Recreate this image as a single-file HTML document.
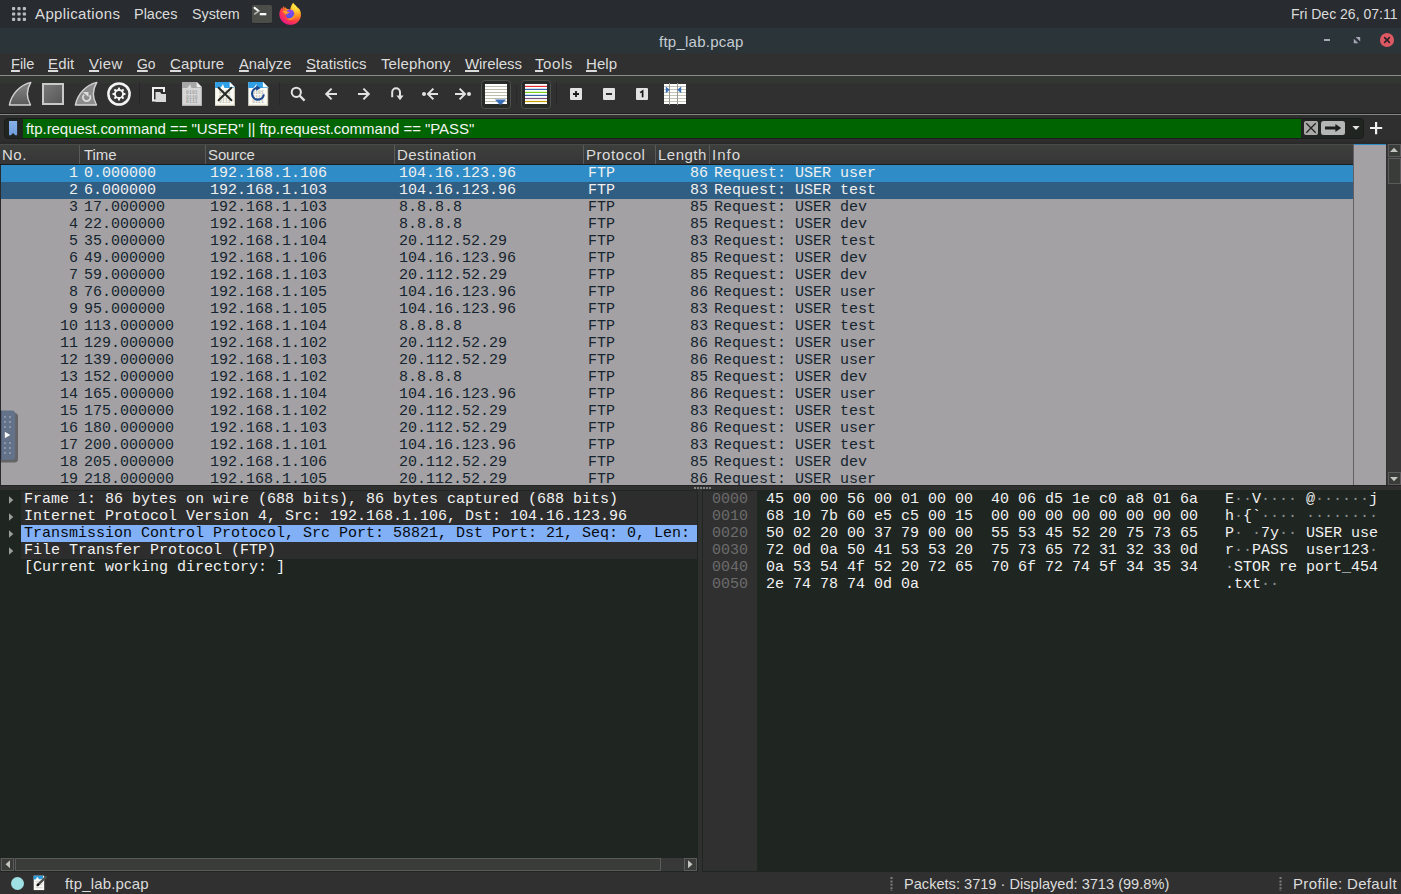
<!DOCTYPE html>
<html lang="en"><head><meta charset="utf-8"><title>ftp_lab.pcap</title>
<style>
*{box-sizing:border-box;margin:0;padding:0}
html,body{width:1401px;height:894px;overflow:hidden;background:#303030}
body{position:relative;font-family:"Liberation Sans",sans-serif;font-size:15px;color:#dcdcdc}
.abs{position:absolute}
.t{position:absolute;white-space:pre;line-height:1}
/* top panel */
#panel{left:0;top:0;width:1401px;height:28px;background:#282b2f}
#title{left:0;top:28px;width:1401px;height:25px;background:#2a3439}
#menubar{left:0;top:53px;width:1401px;height:23px;background:#303030}
#menusep{left:0;top:75px;width:1401px;height:1px;background:#8a8a86}
#toolbar{left:0;top:76px;width:1401px;height:38px;background:linear-gradient(#343634 0,#333533 7px,#303030 8px)}
#tbsep1{left:0;top:113px;width:1401px;height:1px;background:#1f1f1f}
#tbsep2{left:0;top:114px;width:1401px;height:1px;background:#858583}
#filterbar{left:0;top:115px;width:1401px;height:27px;background:#2f2f2f}
#fbdark{left:0;top:139px;width:1401px;height:5px;background:linear-gradient(#2f2f2f,#272927)}
#ffield{left:4px;top:118px;width:1360px;height:21px;background:#212522;border-radius:3.5px;border:1px solid #1a1d1b}
#fgreen{left:23px;top:119px;width:1278px;height:19px;background:#006400}
.m u{text-decoration:underline;text-underline-offset:0.6px;text-decoration-thickness:1.6px}
/* packet list */
#plist{left:0;top:144px;width:1354px;height:341px;background:#a3a1a4;overflow:hidden}
#phead{left:0;top:144px;width:1353px;height:21px;background:linear-gradient(#3d3f3d,#363636);border-top:1px solid #4a4a4a;border-bottom:1px solid #1c1c1c}
.hs{position:absolute;top:145px;width:1px;height:19px;background:#5a5a5a}
.r{position:absolute;left:1px;width:1353px;height:17px;font-family:"Liberation Mono",monospace;font-size:15px;color:#15242e;line-height:17px;white-space:pre}
.r span{position:absolute;top:0}
.r.s1{background:#308cc6;color:#f0f0f0}
.r.s2{background:#305d82;color:#f0f0f0}
.c0{right:1276px}.c1{left:83px}.c2{left:209px}.c3{left:398px}.c4{left:587px}.c5{right:646px}.c6{left:713px}
.mono{font-family:"Liberation Mono",monospace;font-size:15px;line-height:17px;white-space:pre;position:absolute}
.sb{background:#3a3c3a;border:1px solid #5c5a5c}
.asc i{font-style:normal;color:#8e918f}
#tApp{left:35px!important;right:auto!important;letter-spacing:0.371px}
#tPla{left:134px!important;right:auto!important;letter-spacing:0px;transform:scaleX(0.9629);transform-origin:0 0}
#tSys{left:192px!important;right:auto!important;letter-spacing:0px;transform:scaleX(0.9539);transform-origin:0 0}
#tClk{left:1291px!important;right:auto!important;letter-spacing:0px;transform:scaleX(0.9343);transform-origin:0 0}
#tTitle{left:659px!important;right:auto!important;letter-spacing:0.248px}
#m0{left:11px!important;right:auto!important;letter-spacing:0px;transform:scaleX(0.9688);transform-origin:0 0}
#m1{left:48px!important;right:auto!important;letter-spacing:0.141px}
#m2{left:89px!important;right:auto!important;letter-spacing:0.341px}
#m3{left:137px!important;right:auto!important;letter-spacing:0px;transform:scaleX(0.9254);transform-origin:0 0}
#m4{left:170px!important;right:auto!important;letter-spacing:0.139px}
#m5{left:239px!important;right:auto!important;letter-spacing:0px;transform:scaleX(0.9809);transform-origin:0 0}
#m6{left:306px!important;right:auto!important;letter-spacing:0.053px}
#m7{left:381px!important;right:auto!important;letter-spacing:0.113px}
#m8{left:465px!important;right:auto!important;letter-spacing:-0.089px}
#m9{left:535px!important;right:auto!important;letter-spacing:0.583px}
#m10{left:586px!important;right:auto!important;letter-spacing:0.05px}
#tFilter{left:26px!important;right:auto!important;letter-spacing:-0.053px}
#h0{left:2px!important;right:auto!important;letter-spacing:0.5px}
#h1{left:84px!important;right:auto!important;letter-spacing:-0.06px}
#h2{left:208px!important;right:auto!important;letter-spacing:-0.12px}
#h3{left:397px!important;right:auto!important;letter-spacing:0.412px}
#h4{left:586px!important;right:auto!important;letter-spacing:0.555px}
#h5{left:658px!important;right:auto!important;letter-spacing:0.473px}
#h6{left:712px!important;right:auto!important;letter-spacing:0.986px}
#tSt1{left:65px!important;right:auto!important;letter-spacing:0.173px}
#tSt2{left:904px!important;right:auto!important;letter-spacing:0px;transform:scaleX(0.9728);transform-origin:0 0}
#tSt3{left:1293px!important;right:auto!important;letter-spacing:0.345px}
</style></head><body>
<!-- desktop panel -->
<div id="panel" class="abs"></div>
<svg class="abs" style="left:12px;top:7px" width="15" height="15" viewBox="0 0 15 15"><g fill="#b9bdc2"><rect x="0" y="0" width="3.2" height="3.2" rx=".9"/><rect x="5.4" y="0" width="3.2" height="3.2" rx=".9"/><rect x="10.8" y="0" width="3.2" height="3.2" rx=".9"/><rect x="0" y="5.4" width="3.2" height="3.2" rx=".9"/><rect x="5.4" y="5.4" width="3.2" height="3.2" rx=".9"/><rect x="10.8" y="5.4" width="3.2" height="3.2" rx=".9"/><rect x="0" y="10.8" width="3.2" height="3.2" rx=".9"/><rect x="5.4" y="10.8" width="3.2" height="3.2" rx=".9"/><rect x="10.8" y="10.8" width="3.2" height="3.2" rx=".9"/></g></svg>
<div class="t p" id="tApp" style="left:35px;top:6px">Applications</div>
<div class="t p" id="tPla" style="left:135px;top:6px">Places</div>
<div class="t p" id="tSys" style="left:193px;top:6px">System</div>
<div class="t p" id="tClk" style="right:4px;top:6px">Fri Dec 26, 07:11</div>
<!-- terminal icon -->
<svg class="abs" style="left:252px;top:4px" width="20" height="20" viewBox="252 4 20 20"><rect x="252" y="5.4" width="20" height="18" rx="1.6" fill="#1c1e22"/><rect x="252" y="5" width="20" height="18" rx="1.6" fill="#4b4d49"/><path d="M254.6 7.9 L258.6 11" fill="none" stroke="#fbfbfb" stroke-width="2" stroke-linecap="round"/><path d="M258.4 11.4 L254.8 13.9" fill="none" stroke="#b4b4b2" stroke-width="1.7" stroke-linecap="round"/><rect x="259.8" y="13" width="6.5" height="2.3" fill="#fbfbfb"/></svg>
<!-- firefox icon -->
<svg class="abs" style="left:278px;top:2px" width="24" height="24" viewBox="278 2 24 24"><defs><radialGradient id="ffg" gradientUnits="userSpaceOnUse" cx="296.5" cy="5.5" r="22"><stop offset="0" stop-color="#fff44f"/><stop offset="0.28" stop-color="#ffc52e"/><stop offset="0.5" stop-color="#ff8a1f"/><stop offset="0.72" stop-color="#ff3b47"/><stop offset="1" stop-color="#e01490"/></radialGradient><linearGradient id="ffp" x1="0" y1="0" x2="0" y2="1"><stop offset="0" stop-color="#9b42ea"/><stop offset="1" stop-color="#4757e8"/></linearGradient><linearGradient id="ffy" x1="0" y1="0" x2="1" y2="1"><stop offset="0" stop-color="#ffbd2a"/><stop offset="1" stop-color="#ff7d1a"/></linearGradient></defs>
<path d="M293.2 2.8 C294.4 4.6 295.8 5.6 297.2 7.2 C298.2 8.2 298.6 7.6 299.2 9.2 C299.8 9.2 300 9.6 300.1 10.4 C301.8 14.4 300.9 19.2 297.6 22.2 C294 25.4 288.2 25.7 284.1 22.9 C279.9 20.1 278.5 15.2 279.8 11.3 C280.3 9.7 281.2 8.3 282.3 7.3 C282.4 8 282.5 8.8 282.9 9.2 C283 7.8 283.2 6.8 283.6 6 C284.2 6.8 284.6 7.6 284.8 8.4 C285.1 8 285.4 7.6 285.8 7.3 C286 8 286.4 8.6 287 9 C288.2 8.9 289.4 9.3 290.2 10 C290.4 7.4 291.4 4.8 293.2 2.8 Z" fill="url(#ffg)"/>
<circle cx="289.9" cy="14" r="4.5" fill="url(#ffp)"/>
<path d="M282.3 11.7 C284.4 11 287.6 11.2 289.8 12.7 C288 12.9 286.8 13.7 286.3 14.9 C285.5 13.4 283.8 12.4 282.3 11.7 Z" fill="url(#ffy)"/>
<path d="M294.3 13 C295.6 15.4 294.8 18.2 292.4 19.4 C290.4 20.4 288 20 286.6 18.4 C288.8 19 291.4 18.4 292.8 16.6 C293.6 15.6 294.1 14.3 294.3 13 Z" fill="#ff9a26" opacity=".85"/>
</svg>
<!-- title bar -->
<div id="title" class="abs"></div>
<div class="t" id="tTitle" style="left:659px;top:34px;color:#c6ccd3">ftp_lab.pcap</div>
<div class="abs" style="left:1324px;top:39px;width:6px;height:2px;background:#a6a8b6"></div>
<svg class="abs" style="left:1352px;top:35px" width="10" height="10" viewBox="1352 35 10 10"><path d="M1355.6 37 H1360.2 V41.6 Z M1353.8 38.7 V43.2 H1358.3 Z" fill="#a6a8b6"/></svg>
<svg class="abs" style="left:1379px;top:32px" width="16" height="16" viewBox="1379 32 16 16"><circle cx="1387" cy="40" r="7.05" fill="#dc5862"/><path d="M1384.6 37.6 L1389.4 42.4 M1389.4 37.6 L1384.6 42.4" stroke="#2a2126" stroke-width="1.5" stroke-linecap="round"/></svg>
<!-- menubar -->
<div id="menubar" class="abs"></div>
<div id="menusep" class="abs"></div>
<div class="t m" id="m0" style="left:10px;top:56px"><u>F</u>ile</div>
<div class="t m" id="m1" style="left:48px;top:56px"><u>E</u>dit</div>
<div class="t m" id="m2" style="left:89px;top:56px"><u>V</u>iew</div>
<div class="t m" id="m3" style="left:137px;top:56px"><u>G</u>o</div>
<div class="t m" id="m4" style="left:171px;top:56px"><u>C</u>apture</div>
<div class="t m" id="m5" style="left:239px;top:56px"><u>A</u>nalyze</div>
<div class="t m" id="m6" style="left:306px;top:56px"><u>S</u>tatistics</div>
<div class="t m" id="m7" style="left:381px;top:56px">Telephon<u>y</u></div>
<div class="t m" id="m8" style="left:465px;top:56px"><u>W</u>ireless</div>
<div class="t m" id="m9" style="left:536px;top:56px"><u>T</u>ools</div>
<div class="t m" id="m10" style="left:586px;top:56px"><u>H</u>elp</div>
<!-- toolbar -->
<div id="toolbar" class="abs"></div>
<div id="tbsep1" class="abs"></div><div id="tbsep2" class="abs"></div>
<!--ICONS--><svg class="abs" style="left:0;top:76px" width="700" height="38" viewBox="0 76 700 38">
<defs>
<linearGradient id="gfin" x1="0" y1="0" x2="0" y2="1"><stop offset="0" stop-color="#868686"/><stop offset="1" stop-color="#5a5a5a"/></linearGradient>
<linearGradient id="gsq" x1="0" y1="0" x2="1" y2="1"><stop offset="0" stop-color="#7a7a7a"/><stop offset="1" stop-color="#565656"/></linearGradient>
</defs>
<!-- shark fin (start capture) -->
<path d="M9.4 105 C11.5 94 19.5 85.3 30.8 82.4 C26.6 89.5 26.6 98 30.5 105 Z" fill="url(#gfin)" stroke="#d2d2d2" stroke-width="1.4" stroke-linejoin="round"/>
<!-- stop square -->
<rect x="43" y="84" width="20" height="20" fill="url(#gsq)" stroke="#c9c9c9" stroke-width="2"/>
<!-- restart fin -->
<path d="M75.4 105 C77.5 94 85.5 85.3 96.8 82.4 C92.6 89.5 92.6 98 96.5 105 Z" fill="#8c8c8c" stroke="#d2d2d2" stroke-width="1.4" stroke-linejoin="round"/>
<path d="M84.2 94.6 A3.7 3.7 0 1 0 89.6 95.2" fill="none" stroke="#dcdcdc" stroke-width="1.9"/>
<path d="M82.7 92 H88.5 V96.9 Z" fill="#dcdcdc"/>
<!-- options gear -->
<circle cx="119" cy="94" r="10.6" fill="#3a3a3a" stroke="#f4f4f4" stroke-width="2.5"/>
<g fill="#f4f4f4"><circle cx="119" cy="94" r="5"/>
<g id="teeth"><rect x="118" y="87.5" width="2" height="3" rx=".6"/><rect x="118" y="97.5" width="2" height="3" rx=".6"/></g>
<use href="#teeth" transform="rotate(45 119 94)"/><use href="#teeth" transform="rotate(90 119 94)"/><use href="#teeth" transform="rotate(135 119 94)"/></g>
<circle cx="119" cy="94" r="3.1" fill="#343434"/>
<!-- separator -->
<rect x="139" y="82" width="1" height="23" fill="#272727"/>
<!-- open files -->
<path d="M156 100.5 H153 V88 H164 V92" fill="none" stroke="#efefef" stroke-width="2"/>
<path d="M155.5 92 H160 L161.5 94 H166 V102 H155.5 Z" fill="#d9d9d9"/>
<!-- save (grey doc) -->
<g><path d="M182.1 82.1 H196.7 L201.9 87.3 V105.8 H182.1 Z" fill="#d6d6d6"/>
<path d="M182.1 82.1 H196.7 L201.9 87.3 V88 H182.1 Z" fill="#a7a7a7"/>
<path d="M186.29999999999998 88.4 Q188.5 87.6 190.0 84 Q190.7 86.6 191.7 88.4 Z" fill="#dadada"/>
<path d="M196.7 82.1 L201.9 87.3 H196.7 Z" fill="#ececec"/>
<path d="M201.4 87.3 V105.3 H182.1" fill="none" stroke="#b2b2b2" stroke-width="1"/>
<g fill="#a4a4a4" font-family="Liberation Mono,monospace" font-size="4.6" font-weight="bold" letter-spacing=".15"><text x="186.1" y="94.2">0101</text><text x="186.1" y="98.8">0110</text><text x="186.1" y="103.4">0111</text></g></g>
<!-- close (doc with X) -->
<g><path d="M215.1 82.1 H229.7 L234.9 87.3 V105.8 H215.1 Z" fill="#fbfbf3"/>
<path d="M215.1 82.1 H229.7 L234.9 87.3 V88 H215.1 Z" fill="#309fe6"/>
<path d="M219.29999999999998 88.4 Q221.5 87.6 223.0 84 Q223.7 86.6 224.7 88.4 Z" fill="#fdfdf8"/>
<path d="M229.7 82.1 L234.9 87.3 H229.7 Z" fill="#ffffff"/>
<path d="M234.4 87.3 V105.3 H215.1" fill="none" stroke="#c9c7b2" stroke-width="1"/>
<g fill="#bdbbb0" font-family="Liberation Mono,monospace" font-size="4.6" font-weight="bold" letter-spacing=".15"><text x="219.1" y="94.2">0101</text><text x="219.1" y="98.8">0110</text><text x="219.1" y="103.4">0111</text></g>
<path d="M218.6 87.7 L231.4 100.2 M231.4 87.7 L218.6 100.2" stroke="#272b27" stroke-width="2" stroke-linecap="round"/></g>
<!-- reload doc -->
<g><path d="M248.3 82.1 H262.90000000000003 L268.1 87.3 V105.8 H248.3 Z" fill="#fbfbf3"/>
<path d="M248.3 82.1 H262.90000000000003 L268.1 87.3 V88 H248.3 Z" fill="#309fe6"/>
<path d="M252.5 88.4 Q254.70000000000002 87.6 256.2 84 Q256.90000000000003 86.6 257.90000000000003 88.4 Z" fill="#fdfdf8"/>
<path d="M262.90000000000003 82.1 L268.1 87.3 H262.90000000000003 Z" fill="#ffffff"/>
<path d="M267.6 87.3 V105.3 H248.3" fill="none" stroke="#c9c7b2" stroke-width="1"/>
<g fill="#bdbbb0" font-family="Liberation Mono,monospace" font-size="4.6" font-weight="bold" letter-spacing=".15"><text x="252.3" y="94.2">0101</text><text x="252.3" y="98.8">0110</text><text x="252.3" y="103.4">0111</text></g>
<path d="M263.8 94.3 A5.9 5.9 0 1 1 256.9 87.9" fill="none" stroke="#1b4690" stroke-width="2.1"/><path d="M256.2 85.4 L260.7 88 L256.2 90.8 Z" fill="#1b4690"/></g>
<!-- separator -->
<rect x="279" y="82" width="1" height="23" fill="#272727"/>
<!-- find -->
<g stroke="#e2e2e2" fill="none" stroke-width="2"><circle cx="296.3" cy="92.3" r="4.6"/><path d="M299.6 95.6 L304.6 100.6" stroke-width="2.2"/></g>
<!-- back / forward -->
<g stroke="#e2e2e2" fill="none" stroke-width="2"><path d="M337 94 H326.5 M331.6 88.6 L326.2 94 L331.6 99.4"/><path d="M358 94 H368.5 M363.4 88.6 L368.8 94 L363.4 99.4"/></g>
<!-- go to packet -->
<g stroke="#e2e2e2" fill="none" stroke-width="2"><path d="M392.2 97.2 V92.2 A3.9 3.9 0 0 1 400 92.2 V97"/></g><path d="M396.4 95.6 H403.6 L400 100.2 Z" fill="#e2e2e2"/>
<!-- first / last -->
<circle cx="424" cy="94" r="2" fill="#e2e2e2"/><g stroke="#e2e2e2" fill="none" stroke-width="2"><path d="M438 94 H428.5 M433.4 88.6 L428 94 L433.4 99.4"/><path d="M455 94 H464.5 M459.6 88.6 L465 94 L459.6 99.4"/></g><circle cx="469" cy="94" r="2" fill="#e2e2e2"/>
<!-- autoscroll toggle -->
<rect x="481.5" y="80.5" width="29" height="28" rx="3" fill="#292b29" stroke="#4e504e"/>
<rect x="485" y="84" width="22" height="20" fill="#fff"/>
<g stroke="#bdbdae" stroke-width="1"><path d="M485 86.5 H507 M485 89.5 H507 M485 92.5 H507 M485 95.5 H507 M485 98.5 H507 M485 101.5 H507"/></g>
<path d="M495 99.4 H506 L502 104 Q500.5 105.4 499 104 Z" fill="#3a70b8"/>
<rect x="516" y="85" width="1" height="19" fill="#292929"/>
<!-- colorize toggle -->
<rect x="521.5" y="80.5" width="29" height="28" rx="3" fill="#292b29" stroke="#4e504e"/>
<rect x="525" y="84" width="22" height="20" fill="#fff"/>
<g stroke-width="1.2"><path d="M525 86.4 H547" stroke="#ea2f2f"/><path d="M525 89.4 H547" stroke="#3465a4"/><path d="M525 92.4 H547" stroke="#73d216"/><path d="M525 95.4 H547" stroke="#3465a4"/><path d="M525 98.5 H547" stroke="#75507b"/><path d="M525 101.5 H547" stroke="#c4a000"/></g>
<!-- separator -->
<rect x="556" y="82" width="1" height="23" fill="#272727"/>
<!-- zoom in/out/1 -->
<rect x="570" y="88" width="12" height="12" rx="1" fill="#e2e2e2"/><path d="M573 94 H579 M576 91 V97" stroke="#1a1a1a" stroke-width="1.8"/>
<rect x="603" y="88" width="12" height="12" rx="1" fill="#e2e2e2"/><path d="M606 94 H612" stroke="#1a1a1a" stroke-width="1.8"/>
<rect x="636" y="88" width="12" height="12" rx="1" fill="#e2e2e2"/><path d="M640.2 92.6 L642.6 91 V97.2" stroke="#1a1a1a" stroke-width="1.7" fill="none"/>
<!-- resize columns -->
<rect x="664" y="84" width="22" height="20" fill="#fff"/>
<g stroke="#c4c4b6" stroke-width="1"><path d="M664 86.5 H686 M664 89.5 H686 M664 92.5 H686 M664 95.5 H686 M664 98.5 H686 M664 101.5 H686"/></g>
<path d="M669.5 83 V105 M677.5 83 V105" stroke="#9a9a90" stroke-width="1"/>
<path d="M665.8 86.4 L669.7 89.8 L665.8 93.2 Z M681.2 86.4 L677.3 89.8 L681.2 93.2 Z" fill="#3a70b8"/>
</svg>
<!--/ICONS-->
<!-- filter bar -->
<div id="filterbar" class="abs"></div><div id="fbdark" class="abs"></div>
<div id="ffield" class="abs"></div>
<div id="fgreen" class="abs"></div>
<div class="t" id="tFilter" style="left:26px;top:121px;color:#f4f4f4">ftp.request.command == "USER" || ftp.request.command == "PASS"</div>
<!--FILT--><svg class="abs" style="left:0;top:116px" width="1401" height="26" viewBox="0 116 1401 26">
<defs><linearGradient id="gbk" x1="0" y1="0" x2="0" y2="1"><stop offset="0" stop-color="#8ab2ea"/><stop offset="1" stop-color="#6d9cda"/></linearGradient></defs><path d="M9 121 H17.1 V135.2 H15.2 L13.05 132.9 L10.9 135.2 H9 Z" fill="url(#gbk)"/>
<rect x="1304" y="121" width="14" height="14" rx="2" fill="#a9a9a6"/>
<path d="M1306.3 123.3 L1315.7 132.7 M1315.7 123.3 L1306.3 132.7" stroke="#222422" stroke-width="1.3"/>
<rect x="1321" y="121" width="24" height="14" rx="2.5" fill="#b6b6b6"/>
<path d="M1325 126.4 H1335.4 V124 L1341.2 128 L1335.4 132 V129.6 H1325 Z" fill="#1c1f1d"/>
<path d="M1352.4 126 H1359.6 L1356 130 Z" fill="#e4e4e4"/>
<path d="M1370 128 H1382.2 M1376.1 122 V134.2" stroke="#f2f2f2" stroke-width="2.2"/>
</svg>
<!--/FILT-->
<!-- packet list -->
<div id="plist" class="abs"></div>
<div id="phead" class="abs"></div>
<div class="hs" style="left:79px"></div><div class="hs" style="left:205px"></div><div class="hs" style="left:394px"></div><div class="hs" style="left:583px"></div><div class="hs" style="left:655px"></div><div class="hs" style="left:709px"></div>
<div class="t h" id="h0" style="left:3px;top:147px">No.</div>
<div class="t h" id="h1" style="left:83px;top:147px">Time</div>
<div class="t h" id="h2" style="left:209px;top:147px">Source</div>
<div class="t h" id="h3" style="left:398px;top:147px">Destination</div>
<div class="t h" id="h4" style="left:587px;top:147px">Protocol</div>
<div class="t h" id="h5" style="left:659px;top:147px">Length</div>
<div class="t h" id="h6" style="left:713px;top:147px">Info</div>
<div class="abs" style="left:0;top:165px;width:1px;height:320px;background:#2a2a2a;z-index:3"></div>
<div id="rows" class="abs" style="left:0;top:165px;width:1354px;height:320px;overflow:hidden">
<div style="top:0px" class="r s1"><span class="c0">1</span><span class="c1">0.000000</span><span class="c2">192.168.1.106</span><span class="c3">104.16.123.96</span><span class="c4">FTP</span><span class="c5">86</span><span class="c6">Request: USER user</span></div>
<div style="top:17px" class="r s2"><span class="c0">2</span><span class="c1">6.000000</span><span class="c2">192.168.1.103</span><span class="c3">104.16.123.96</span><span class="c4">FTP</span><span class="c5">83</span><span class="c6">Request: USER test</span></div>
<div style="top:34px" class="r"><span class="c0">3</span><span class="c1">17.000000</span><span class="c2">192.168.1.103</span><span class="c3">8.8.8.8</span><span class="c4">FTP</span><span class="c5">85</span><span class="c6">Request: USER dev</span></div>
<div style="top:51px" class="r"><span class="c0">4</span><span class="c1">22.000000</span><span class="c2">192.168.1.106</span><span class="c3">8.8.8.8</span><span class="c4">FTP</span><span class="c5">85</span><span class="c6">Request: USER dev</span></div>
<div style="top:68px" class="r"><span class="c0">5</span><span class="c1">35.000000</span><span class="c2">192.168.1.104</span><span class="c3">20.112.52.29</span><span class="c4">FTP</span><span class="c5">83</span><span class="c6">Request: USER test</span></div>
<div style="top:85px" class="r"><span class="c0">6</span><span class="c1">49.000000</span><span class="c2">192.168.1.106</span><span class="c3">104.16.123.96</span><span class="c4">FTP</span><span class="c5">85</span><span class="c6">Request: USER dev</span></div>
<div style="top:102px" class="r"><span class="c0">7</span><span class="c1">59.000000</span><span class="c2">192.168.1.103</span><span class="c3">20.112.52.29</span><span class="c4">FTP</span><span class="c5">85</span><span class="c6">Request: USER dev</span></div>
<div style="top:119px" class="r"><span class="c0">8</span><span class="c1">76.000000</span><span class="c2">192.168.1.105</span><span class="c3">104.16.123.96</span><span class="c4">FTP</span><span class="c5">86</span><span class="c6">Request: USER user</span></div>
<div style="top:136px" class="r"><span class="c0">9</span><span class="c1">95.000000</span><span class="c2">192.168.1.105</span><span class="c3">104.16.123.96</span><span class="c4">FTP</span><span class="c5">83</span><span class="c6">Request: USER test</span></div>
<div style="top:153px" class="r"><span class="c0">10</span><span class="c1">113.000000</span><span class="c2">192.168.1.104</span><span class="c3">8.8.8.8</span><span class="c4">FTP</span><span class="c5">83</span><span class="c6">Request: USER test</span></div>
<div style="top:170px" class="r"><span class="c0">11</span><span class="c1">129.000000</span><span class="c2">192.168.1.102</span><span class="c3">20.112.52.29</span><span class="c4">FTP</span><span class="c5">86</span><span class="c6">Request: USER user</span></div>
<div style="top:187px" class="r"><span class="c0">12</span><span class="c1">139.000000</span><span class="c2">192.168.1.103</span><span class="c3">20.112.52.29</span><span class="c4">FTP</span><span class="c5">86</span><span class="c6">Request: USER user</span></div>
<div style="top:204px" class="r"><span class="c0">13</span><span class="c1">152.000000</span><span class="c2">192.168.1.102</span><span class="c3">8.8.8.8</span><span class="c4">FTP</span><span class="c5">85</span><span class="c6">Request: USER dev</span></div>
<div style="top:221px" class="r"><span class="c0">14</span><span class="c1">165.000000</span><span class="c2">192.168.1.104</span><span class="c3">104.16.123.96</span><span class="c4">FTP</span><span class="c5">86</span><span class="c6">Request: USER user</span></div>
<div style="top:238px" class="r"><span class="c0">15</span><span class="c1">175.000000</span><span class="c2">192.168.1.102</span><span class="c3">20.112.52.29</span><span class="c4">FTP</span><span class="c5">83</span><span class="c6">Request: USER test</span></div>
<div style="top:255px" class="r"><span class="c0">16</span><span class="c1">180.000000</span><span class="c2">192.168.1.103</span><span class="c3">20.112.52.29</span><span class="c4">FTP</span><span class="c5">86</span><span class="c6">Request: USER user</span></div>
<div style="top:272px" class="r"><span class="c0">17</span><span class="c1">200.000000</span><span class="c2">192.168.1.101</span><span class="c3">104.16.123.96</span><span class="c4">FTP</span><span class="c5">83</span><span class="c6">Request: USER test</span></div>
<div style="top:289px" class="r"><span class="c0">18</span><span class="c1">205.000000</span><span class="c2">192.168.1.106</span><span class="c3">20.112.52.29</span><span class="c4">FTP</span><span class="c5">85</span><span class="c6">Request: USER dev</span></div>
<div style="top:306px" class="r"><span class="c0">19</span><span class="c1">218.000000</span><span class="c2">192.168.1.105</span><span class="c3">20.112.52.29</span><span class="c4">FTP</span><span class="c5">86</span><span class="c6">Request: USER user</span></div>

</div>
<!-- minimap + vscroll -->
<div class="abs" style="left:1353px;top:144px;width:1px;height:341px;background:#626062"></div>
<div class="abs" style="left:1354px;top:144px;width:32px;height:341px;background:#a3a1a4"></div>
<div class="abs" style="left:1354px;top:144px;width:32px;height:1px;background:#308cc6"></div>
<div class="abs" style="left:1387px;top:144px;width:14px;height:342px;background:#373737"></div>
<div class="abs sb" style="left:1388px;top:144px;width:13px;height:13px"></div>
<svg class="abs" style="left:1390px;top:147px" width="8" height="6" viewBox="0 0 8 6"><path d="M0 5 L4 0.8 L8 5Z" fill="#c4c4c0"/></svg>
<div class="abs sb" style="left:1388px;top:158px;width:13px;height:26px"></div>
<div class="abs sb" style="left:1388px;top:472px;width:13px;height:13px"></div>
<svg class="abs" style="left:1390px;top:476px" width="8" height="6" viewBox="0 0 8 6"><path d="M0 1 L4 5.2 L8 1Z" fill="#c4c4c0"/></svg>
<!-- left tab handle -->
<svg class="abs" style="left:0;top:408px;z-index:5" width="20" height="58" viewBox="0 408 20 58">
<path d="M1 413 H14.5 Q18 413 18 416.5 V459 Q18 462.6 14.5 462.6 H1 Z" fill="#656567"/>
<path d="M0 410.4 H12 Q15.2 410.4 15.2 413.6 V456.5 Q15.2 459.8 12 459.8 H0 Z" fill="#637189"/>
<rect x="0" y="410.4" width="1" height="49.4" fill="#1e2228"/><rect x="1" y="410.4" width="1" height="49.4" fill="#566379"/>
<rect x="4" y="416" width="2" height="2" fill="#8a96ab"/><rect x="9" y="416" width="2" height="2" fill="#8a96ab"/><rect x="4" y="421" width="2" height="2" fill="#8a96ab"/><rect x="9" y="421" width="2" height="2" fill="#8a96ab"/><rect x="4" y="426" width="2" height="2" fill="#8a96ab"/><rect x="9" y="426" width="2" height="2" fill="#8a96ab"/><rect x="4" y="442" width="2" height="2" fill="#8a96ab"/><rect x="9" y="442" width="2" height="2" fill="#8a96ab"/><rect x="4" y="447" width="2" height="2" fill="#8a96ab"/><rect x="9" y="447" width="2" height="2" fill="#8a96ab"/><rect x="4" y="452" width="2" height="2" fill="#8a96ab"/><rect x="9" y="452" width="2" height="2" fill="#8a96ab"/>
<path d="M4.8 431.8 L10.3 435 L4.8 438.2 Z" fill="#fafafa"/>
</svg>
<!-- splitter -->
<div class="abs" style="left:0;top:485px;width:1401px;height:6px;background:#303030"></div>
<div class="abs" style="left:0;top:485px;width:1401px;height:1px;background:#242424"></div>
<div class="abs" style="left:694px;top:487px;width:2px;height:2px;background:#848484"></div><div class="abs" style="left:697px;top:487px;width:2px;height:2px;background:#848484"></div><div class="abs" style="left:700px;top:487px;width:2px;height:2px;background:#848484"></div><div class="abs" style="left:703px;top:487px;width:2px;height:2px;background:#848484"></div><div class="abs" style="left:706px;top:487px;width:2px;height:2px;background:#848484"></div><div class="abs" style="left:709px;top:487px;width:2px;height:2px;background:#848484"></div>
<!-- detail pane -->
<div id="detail" class="abs" style="left:0;top:490px;width:698px;height:382px;background:#1f2521"></div>
<div class="abs" style="left:21px;top:491px;width:676px;height:68px;background:#2d2d2d"></div>
<div class="abs" style="left:21px;top:525px;width:676px;height:17px;background:#82b0f6"></div>
<div class="mono d" style="left:24px;top:491px;color:#f2f2f2">Frame 1: 86 bytes on wire (688 bits), 86 bytes captured (688 bits)</div>
<div class="mono d" style="left:24px;top:508px;color:#f2f2f2">Internet Protocol Version 4, Src: 192.168.1.106, Dst: 104.16.123.96</div>
<div class="mono d" style="left:24px;top:525px;color:#05080c;width:672px;overflow:hidden">Transmission Control Protocol, Src Port: 58821, Dst Port: 21, Seq: 0, Len: 32</div>
<div class="mono d" style="left:24px;top:542px;color:#f2f2f2">File Transfer Protocol (FTP)</div>
<div class="mono d" style="left:24px;top:559px;color:#f2f2f2">[Current working directory: ]</div>
<svg class="abs" style="left:9px;top:495.5px" width="5" height="8" viewBox="0 0 5 8"><path d="M0 0.2 L4.3 4 L0 7.8Z" fill="#9b9e99"/></svg>
<svg class="abs" style="left:9px;top:512.5px" width="5" height="8" viewBox="0 0 5 8"><path d="M0 0.2 L4.3 4 L0 7.8Z" fill="#9b9e99"/></svg>
<svg class="abs" style="left:9px;top:529.5px" width="5" height="8" viewBox="0 0 5 8"><path d="M0 0.2 L4.3 4 L0 7.8Z" fill="#9b9e99"/></svg>
<svg class="abs" style="left:9px;top:546.5px" width="5" height="8" viewBox="0 0 5 8"><path d="M0 0.2 L4.3 4 L0 7.8Z" fill="#9b9e99"/></svg>
<!-- hscroll -->
<div class="abs" style="left:0;top:858px;width:697px;height:13px;background:#383838"></div>
<div class="abs sb" style="left:1px;top:858px;width:13px;height:13px"></div>
<svg class="abs" style="left:4.5px;top:860px" width="5" height="9" viewBox="0 0 5 9"><path d="M5 0.3 L0.5 4.3 L5 8.3Z" fill="#c4c4c0"/></svg>
<div class="abs sb" style="left:15px;top:858px;width:646px;height:13px"></div>
<div class="abs sb" style="left:684px;top:858px;width:13px;height:13px"></div>
<svg class="abs" style="left:688px;top:860px" width="5" height="9" viewBox="0 0 5 9"><path d="M0 0.3 L4.5 4.3 L0 8.3Z" fill="#c4c4c0"/></svg>
<!-- vertical splitter -->
<div class="abs" style="left:698px;top:490px;width:4px;height:382px;background:#303030"></div>
<!-- bytes pane -->
<div id="bytes" class="abs" style="left:702px;top:490px;width:699px;height:382px;background:#1f2521"></div>
<div class="abs" style="left:703px;top:491px;width:54px;height:380px;background:#303030"></div>
<div class="mono" style="left:712px;top:491px;color:#6c6c6c">0000
0010
0020
0030
0040
0050</div>
<div class="mono" style="left:766px;top:491px;color:#f2f2f2">45 00 00 56 00 01 00 00  40 06 d5 1e c0 a8 01 6a
68 10 7b 60 e5 c5 00 15  00 00 00 00 00 00 00 00
50 02 20 00 37 79 00 00  55 53 45 52 20 75 73 65
72 0d 0a 50 41 53 53 20  75 73 65 72 31 32 33 0d
0a 53 54 4f 52 20 72 65  70 6f 72 74 5f 34 35 34
2e 74 78 74 0d 0a</div>
<div class="mono asc" style="left:1225px;top:491px;color:#f2f2f2">E<i>··</i>V<i>····</i> @<i>······</i>j
h<i>·</i>{`<i>····</i> <i>········</i>
P<i>·</i> <i>·</i>7y<i>··</i> USER use
r<i>··</i>PASS  user123<i>·</i>
<i>·</i>STOR re port_454
.txt<i>··</i></div>
<!-- status bar -->
<div class="abs" style="left:0;top:872px;width:1401px;height:22px;background:#303030"></div>
<div class="abs" style="left:10.5px;top:876.5px;width:13px;height:13px;border-radius:50%;background:#9fe0e4"></div>
<svg class="abs" style="left:30px;top:872px" width="20" height="22" viewBox="30 872 20 22">
<rect x="33.7" y="875.7" width="10.5" height="14.4" fill="#f7f7f3"/>
<path d="M33.7 875.7 H43 V878.6 Q40.5 879.6 39 879 L37.2 876.8 L35.8 879.3 Q34.6 879.6 33.7 879.2 Z" fill="#2b9bde"/>
<path d="M35.5 881.6 H42.5 M35.5 884.6 H42.5 M35.5 887.6 H42.5" stroke="#d4d4d0" stroke-width="1"/>
<path d="M37.6 885.2 L45.8 877.2" stroke="#4c504c" stroke-width="2.4" stroke-linecap="round"/>
<path d="M37.2 885.6 L39.2 884.9 L38 883.6 Z" fill="#050505" stroke="#050505" stroke-width=".8"/>
</svg>
<svg class="abs" style="left:890px;top:876px" width="3" height="16" viewBox="0 0 3 16"><path d="M1.5 1 V15" stroke="#7e7e7e" stroke-width="2" stroke-dasharray="2 1.4"/></svg>
<svg class="abs" style="left:1278.5px;top:876px" width="3" height="16" viewBox="0 0 3 16"><path d="M1.5 1 V15" stroke="#7e7e7e" stroke-width="2" stroke-dasharray="2 1.4"/></svg>
<div class="t" id="tSt1" style="left:64px;top:876px">ftp_lab.pcap</div>
<div class="t" id="tSt2" style="left:905px;top:876px">Packets: 3719 · Displayed: 3713 (99.8%)</div>
<div class="t" id="tSt3" style="left:1294px;top:876px">Profile: Default</div>
</body></html>
